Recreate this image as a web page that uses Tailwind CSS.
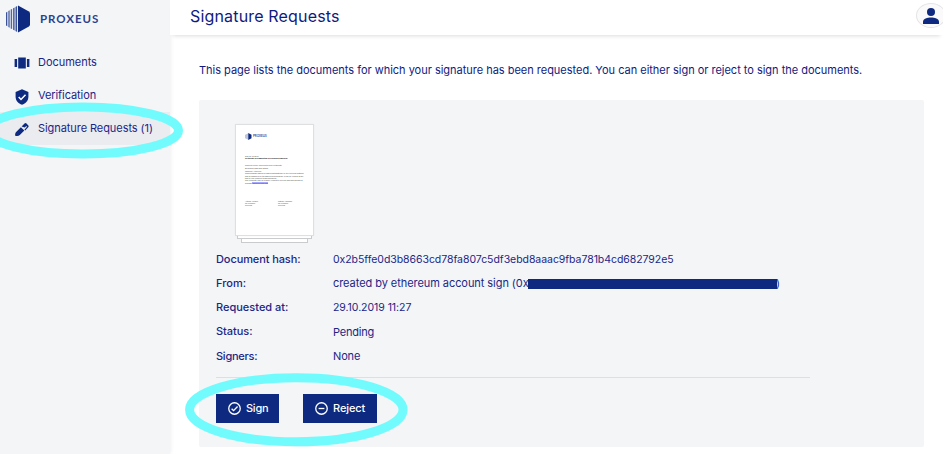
<!DOCTYPE html>
<html lang="en">
<head>
<meta charset="utf-8">
<title>Signature Requests</title>
<script src="https://cdn.jsdelivr.net/npm/@tailwindcss/browser@4"></script>
</head>
<body class="relative h-[454px] w-[943px] overflow-hidden bg-white font-['Inter',sans-serif] text-[#1c2587]">
<div class="flex h-full">
  <aside class="h-full w-[170px] shrink-0 bg-[#f3f5f7] shadow-[0_0_5px_rgba(0,0,0,0.09)]">
    <div class="flex h-[45px] items-start pt-[5px] pl-[5px]">
      <svg class="h-[28px] w-[26px]" viewBox="0 0 26 28">
        <path d="M13 .5 23.500 6.300Q25 7.200 25 8.600v10.800q0 1.400-1.500 2.300L13 27.500z" fill="#0e2a80"/>
        <g fill="#0e2a80">
          <path d="M1 7.600l1.300-.9v14.600L1 20.400z" opacity=".8"/><path d="M3.300 6l1.400-.8v17.600L3.300 22z" opacity=".7"/>
          <path d="M5.700 4.600l1.400-.7v20.200l-1.400-.7z" opacity=".7"/><path d="M8.100 3.200l1.500-.8v23.200l-1.500-.8z" opacity=".75"/>
          <path d="M10.500 1.900l1.600-.9v26l-1.600-.9z" opacity=".8"/>
        </g>
      </svg>
      <span class="mt-[6px] ml-[9px] font-['Lato',sans-serif] text-[11.500px] leading-[15px] font-bold tracking-[0.95px] text-[#2b418f]">PROXEUS</span>
    </div>
    <nav class="text-[11px]">
      <a class="flex h-[34px] items-center pl-[14px]">
        <svg class="mt-px h-[12px] w-[16px]" viewBox="0 0 16 12" fill="#0e2a80"><path d="M4.200.6h7.600v10.800H4.200zM.6 2h2.500v8H.6zM12.900 2h2.500v8h-2.500z"/></svg>
        <span class="ml-[8px] tracking-[-0.03px]">Documents</span>
      </a>
      <a class="flex h-[33px] items-center pl-[14px]">
        <svg class="mt-[2px] h-[18px] w-[16px]" viewBox="0 0 16 18"><path d="M8 1.300 14.400 4.100v4.700c0 3.700-2.700 7-6.400 7.900-3.700-.9-6.400-4.200-6.400-7.900V4.100z" fill="#0e2a80"/><path d="m4.700 9 2.300 2.400 4.500-4.700" fill="none" stroke="#fff" stroke-width="1.500"/></svg>
        <span class="ml-[8px] tracking-[-0.08px]">Verification</span>
      </a>
      <a class="flex h-[33px] items-center bg-[#ebecef] pl-[14px]">
        <svg class="h-[16px] w-[16px]" viewBox="0 0 16 16" fill="#0e2a80"><path d="M1.200 14.800c-.2-1.800.1-3 1.200-4.100l4.500-4.500 3.400 3.400-4.500 4.500c-1 1-2.700 1-4.600.7zM7.600 5.500l2.900-2.900c.8-.8 1.400-.7 2 0l1.600 1.600c.7.7.7 1.300.1 2l-3 3.300-.8-.8 2.600-2.900-.7-.8-1.500 1.500z"/></svg>
        <span class="ml-[8px] tracking-[-0.07px]">Signature Requests (1)</span>
      </a>
    </nav>
  </aside>
  <div class="flex min-w-0 flex-1 flex-col">
    <header class="relative flex h-[35px] shrink-0 items-start justify-between bg-white pl-[20px] shadow-[0_4px_4px_-3px_rgba(0,0,0,0.14)]">
      <h1 class="mt-[5px] text-[16px] leading-[22px] tracking-[0.17px] text-[#101a80]">Signature Requests</h1>
      <div class="-mr-[3px] mt-[3px] flex h-[25px] w-[30px] items-center justify-center rounded-[50%] border border-[#e4e4e7] bg-[#fafafa]">
        <svg class="h-[16px] w-[16px]" viewBox="0 0 16 16" fill="#0e2a80"><circle cx="8" cy="4" r="4"/><path d="M0 16v-2.300C0 11 4.500 9.600 8 9.600s8 1.400 8 4.100V16z"/></svg>
      </div>
    </header>
    <main class="px-[29px] pr-[19px] pt-[27px]">
      <p class="h-[38px] text-[11px] leading-[16px] whitespace-nowrap tracking-[-0.015px] text-[#101a80]">This page lists the documents for which your signature has been requested. You can either sign or reject to sign the documents.</p>
      <section class="h-[347px] rounded-[2px] bg-[#f3f5f7] pt-[24px] pl-[17px]">
        <div class="ml-[19px] flex h-[122px] w-[79px] flex-col items-center">
          <div class="z-10 h-[112px] w-[79px] shrink-0 rounded-[1px] border border-[#dedfe1] bg-white pt-[8px] pl-[9px] font-['Liberation_Sans',sans-serif] text-[1.900px] leading-[2.100px] whitespace-nowrap text-[#444] shadow-[0_0_1px_rgba(0,0,0,0.15)]">
            <div class="flex h-[22px] items-start">
              <svg class="h-[7px] w-[7px]" viewBox="0 0 26 28"><path d="M12 0 25 7v14l-13 7z" fill="#0e2a80"/><path d="M1 7l3-2v18l-3-2zM6 4l3-2v24l-3-2z" fill="#7c8abb"/></svg>
              <span class="ml-[1px] mt-[1px] font-['Lato',sans-serif] text-[3px] leading-[4px] font-bold text-[#3b4f94]">PROXEUS</span>
            </div>
            <p>Zug, 29.10.2019</p>
            <p class="font-bold text-black">Certificate of Completion of Proxeus Demo Doc</p>
            <p class="mt-[4.800px]">This is to certify Proxeus Generic Certificate</p>
            <p class="mt-[1.400px]">Document hash and details<br>Issued by: Proxeus</p>
            <p class="mt-[0.800px]">This certificate has been issued automatically by the Proxeus platform<br>and is registered on the Ethereum blockchain. It can be verified at any<br>time by the recipient of this document</p>
            <p class="mt-[0.700px]">The certificate may be publicly verified by anyone with this document</p>
            <p class="flex">available<span class="h-[2px] bg-[#a9a9ff] text-[#1a1aee]">www.proxeus.com</span></p>
            <div class="mt-[16.300px] flex"><p class="w-[33px]">Antoine Verdon<br>Co-Founder<br>Proxeus</p><p>Patrick Allemann<br>Co-Founder<br>Proxeus</p></div>
          </div>
          <div class="-mt-px h-[4px] w-[75px] shrink-0 border border-[#c9cbcd] bg-white"></div>
          <div class="-mt-px h-[5px] w-[67px] shrink-0 border border-[#c9cbcd] bg-white"></div>
        </div>
        <dl class="grid w-[594px] auto-rows-[24.2px] grid-cols-[117px_1fr] items-center border-b border-[#dddfe3] pt-px pb-[9px] text-[11px] whitespace-nowrap">
          <dt class="font-medium tracking-[-0.1px]">Document hash:</dt><dd class="pt-px text-[10.500px] tracking-[-0.05px]">0x2b5ffe0d3b8663cd78fa807c5df3ebd8aaac9fba781b4cd682792e5</dd>
          <dt class="font-medium">From:</dt><dd class="flex items-center"><span class="w-[195px] tracking-[-0.06px]">created by ethereum account sign (0x</span><span class="z-10 mt-[2px] h-[10px] w-[249px] bg-[#0e2a80]"></span><span class="-ml-px">)</span></dd>
          <dt class="font-medium">Requested at:</dt><dd class="text-[10.500px] tracking-[-0.05px]">29.10.2019 11:27</dd>
          <dt class="font-medium tracking-[-0.05px]">Status:</dt><dd class="pt-px tracking-[-0.2px]">Pending</dd>
          <dt class="font-medium tracking-[-0.25px]">Signers:</dt><dd class="tracking-[-0.15px]">None</dd>
        </dl>
        <div class="mt-[16px] flex gap-[24px] text-[11px] font-medium text-white">
          <button class="flex h-[29px] w-[63px] items-center bg-[#0e2a80] pl-[12px]">
            <svg class="h-[13px] w-[13px]" viewBox="0 0 14 14" fill="none" stroke="#fff" stroke-width="1.400"><circle cx="7" cy="7" r="6.200"/><path d="m3.900 7.200 2.100 2.100 4.300-4.500"/></svg>
            <span class="ml-[5px] tracking-[-0.25px]">Sign</span>
          </button>
          <button class="flex h-[29px] w-[74px] items-center bg-[#0e2a80] pl-[12px]">
            <svg class="h-[13px] w-[13px]" viewBox="0 0 14 14" fill="none" stroke="#fff" stroke-width="1.400"><circle cx="7" cy="7" r="6.200"/><path d="M3.900 7h6.200"/></svg>
            <span class="ml-[5px] tracking-[-0.1px]">Reject</span>
          </button>
        </div>
      </section>
    </main>
  </div>
</div>
<svg class="pointer-events-none absolute inset-0 z-20 h-[454px] w-[943px]" viewBox="0 0 943 454" fill="none" stroke="#72fbfd" stroke-width="9">
  <ellipse cx="83" cy="130.500" rx="95.500" ry="23.500"/>
  <ellipse cx="296.300" cy="409.700" rx="106.700" ry="32"/>
</svg>
</body>
</html>
